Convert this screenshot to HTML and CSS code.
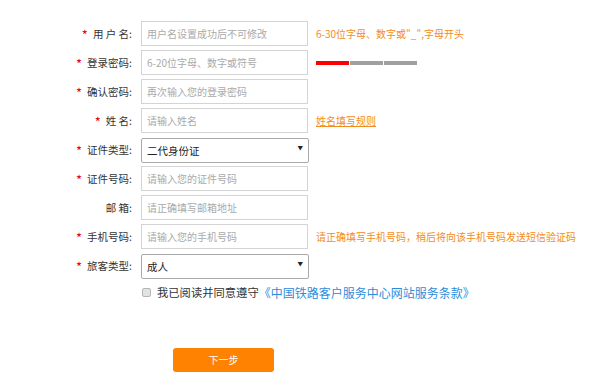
FILE: index.html
```
<!DOCTYPE html>
<html lang="zh-CN">
<head>
  <meta charset="UTF-8">
  <meta name="viewport" content="width=device-width, initial-scale=1.0">
  <title>用户注册</title>
  <link rel="stylesheet" href="styles.css">
</head>
<body>
  <div class="reg-form">
    <div class="row">
      <label class="label"><em>*</em>用 户 名:</label>
      <input type="text" placeholder="用户名设置成功后不可修改">
      <span class="tip">6-30位字母、数字或"_",字母开头</span>
    </div>
    <div class="row">
      <label class="label"><em>*</em>登录密码:</label>
      <input type="password" placeholder="6-20位字母、数字或符号">
      <span class="strength">
        <i class="on"></i><i></i><i></i>
      </span>
    </div>
    <div class="row">
      <label class="label"><em>*</em>确认密码:</label>
      <input type="password" placeholder="再次输入您的登录密码">
    </div>
    <div class="row">
      <label class="label"><em>*</em>姓 名:</label>
      <input type="text" placeholder="请输入姓名">
      <a class="tip rule" href="#">姓名填写规则</a>
    </div>
    <div class="row">
      <label class="label"><em>*</em>证件类型:</label>
      <span class="select-wrap">
        <select>
          <option>二代身份证</option>
          <option>港澳通行证</option>
          <option>台湾通行证</option>
          <option>护照</option>
        </select>
      </span>
    </div>
    <div class="row">
      <label class="label"><em>*</em>证件号码:</label>
      <input type="text" placeholder="请输入您的证件号码">
    </div>
    <div class="row">
      <label class="label">邮 箱:</label>
      <input type="text" placeholder="请正确填写邮箱地址">
    </div>
    <div class="row">
      <label class="label"><em>*</em>手机号码:</label>
      <input type="text" placeholder="请输入您的手机号码">
      <span class="tip">请正确填写手机号码，稍后将向该手机号码发送短信验证码</span>
    </div>
    <div class="row">
      <label class="label"><em>*</em>旅客类型:</label>
      <span class="select-wrap">
        <select>
          <option>成人</option>
          <option>儿童</option>
          <option>学生</option>
          <option>残疾军人</option>
        </select>
      </span>
    </div>

    <div class="agree">
      <input type="checkbox" id="agree">
      <label for="agree">我已阅读并同意遵守</label>
      <a href="#">《中国铁路客户服务中心网站服务条款》</a>
    </div>

    <div class="actions">
      <button type="button">下一步</button>
    </div>
  </div>
</body>
</html>
```

FILE: styles.css
```
body {
  margin: 0;
  font-family: "Noto Sans CJK SC", "Microsoft YaHei", sans-serif;
  color: #333;
  background: #fff;
}

.reg-form {
  padding-top: 21px;
}

.row {
  display: flex;
  align-items: center;
  height: 25px;
  margin-bottom: 4px;
}

.label {
  width: 132px;
  margin-right: 9px;
  text-align: right;
  font-size: 10.5px;
  white-space: pre;
}

.label em {
  font-style: normal;
  font-size: 13px;
  line-height: 10px;
  color: #e60012;
  margin-right: 5px;
  vertical-align: -2px;
}

.row input,
.select-wrap select {
  box-sizing: border-box;
  width: 167px;
  height: 25px;
  margin: 0;
  padding: 0 5px;
  border: 1px solid #d4d4d4;
  font-family: inherit;
  font-size: 10px;
  color: #333;
  outline: none;
}

.row input::placeholder {
  color: #aaa;
}

.tip {
  margin-left: 8px;
  font-size: 10px;
  color: #f28c1f;
}

.rule {
  text-decoration: underline;
}

/* password strength */
.strength {
  display: flex;
  gap: 1px;
  margin-left: 8px;
}

.strength i {
  width: 33px;
  height: 4px;
  background: #a0a0a0;
}

.strength i.on {
  background: #f00;
}

/* select box */
.select-wrap {
  position: relative;
  display: inline-block;
}

.select-wrap select {
  -webkit-appearance: none;
  appearance: none;
  width: 168px;
  border-color: #a9a9a9;
  border-radius: 2px;
  background: #fff;
  font-size: 10.5px;
  color: #222;
}

.select-wrap::after {
  content: "▼";
  position: absolute;
  right: 6px;
  top: 8px;
  font-size: 5.5px;
  color: #222;
  pointer-events: none;
}

.agree {
  display: flex;
  align-items: center;
  height: 20px;
  margin-top: 4px;
  padding-left: 142px;
  font-size: 11.3px;
}

.agree input {
  -webkit-appearance: none;
  appearance: none;
  box-sizing: border-box;
  width: 9px;
  height: 9px;
  margin: 0 6px 0 0;
  border: 1px solid #b5b5b5;
  border-radius: 2px;
  background: #e2e2e2;
}

.agree a {
  font-size: 12px;
  color: #2e8ddb;
  text-decoration: none;
}

.actions {
  margin-top: 43px;
  padding-left: 173px;
}

.actions button {
  width: 101px;
  height: 24px;
  border: none;
  border-radius: 3px;
  background: #ff8200;
  color: #fff;
  font-family: inherit;
  font-size: 10px;
  cursor: pointer;
}
```
